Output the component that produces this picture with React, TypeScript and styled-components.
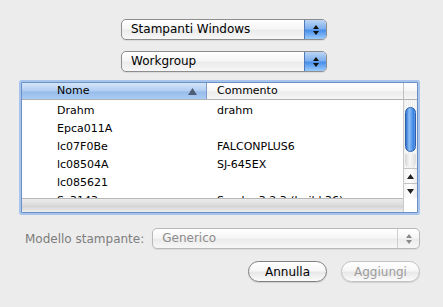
import styled, { createGlobalStyle } from 'styled-components'

const GlobalStyle = createGlobalStyle`
  html, body {
    margin: 0;
    padding: 0;
  }

  body {
    background: #ececec;
    font-family: 'DejaVu Sans', 'Liberation Sans', sans-serif;
    color: #000;
  }
`

const Dialog = styled.div`
  width: 443px;
  height: 307px;
  box-sizing: border-box;

  display: flex;
  flex-direction: column;

  padding: 19px 23px 0 19px;
`

const PopupStack = styled.div`
  display: flex;
  flex-direction: column;
  gap: 11px;

  padding-left: 102px;
`

const Popup = styled.div<{ $width?: number; $disabled?: boolean }>`
  display: flex;
  align-items: stretch;

  width: ${(p) => (p.$width ? `${p.$width}px` : 'auto')};
  flex: ${(p) => (p.$width ? 'none' : '1')};
  height: 21px;
  box-sizing: border-box;

  border: 1px solid ${(p) => (p.$disabled ? '#b9b9b9' : '#8d8d8d')};
  border-radius: 5px;
  overflow: hidden;

  background: linear-gradient(#ffffff, #f6f6f6 45%, #ebebeb 55%, #f7f7f7);
  box-shadow: 0 1px 1px rgba(0, 0, 0, 0.08);

  span {
    flex: 1;
    padding-left: 9px;
    font-size: 12px;
    line-height: 19px;
    color: ${(p) => (p.$disabled ? '#8c8c8c' : '#000')};
  }
`

const PopupArrows = styled.div<{ $disabled?: boolean }>`
  width: 21px;
  display: flex;
  flex-direction: column;
  align-items: center;
  justify-content: center;
  gap: 2px;

  border-left: 1px solid ${(p) => (p.$disabled ? '#cfcfcf' : '#4f7bbd')};
  background: ${(p) =>
    p.$disabled
      ? 'transparent'
      : 'linear-gradient(#bcd6f6, #7fb0ee 45%, #4a8fea 55%, #9ccbfb)'};

  svg {
    display: block;
  }
`

const TableFrame = styled.div`
  margin-top: 10px;
  margin-left: 2px;
  width: 397px;
  height: 131px;
  box-sizing: border-box;

  display: flex;
  flex-direction: column;

  border: 1px solid #6c90c4;
  box-shadow: 0 0 0 2px #a7c4ec;
  border-radius: 1px;
  background: #fff;
  overflow: hidden;
`

const HeaderRow = styled.div`
  display: flex;
  height: 17px;
  flex: none;
  box-sizing: border-box;
  border-bottom: 1px solid #b3b3b3;
  font-size: 11px;
  line-height: 16px;
`

const HeaderCell = styled.div<{ $width?: number; $sorted?: boolean; $inset?: number }>`
  position: relative;
  width: ${(p) => (p.$width ? `${p.$width}px` : 'auto')};
  flex: ${(p) => (p.$width ? 'none' : '1')};
  box-sizing: border-box;
  padding-left: ${(p) => p.$inset ?? 10}px;

  border-right: 1px solid ${(p) => (p.$sorted ? '#7c9ccb' : '#c2c2c2')};
  background: ${(p) =>
    p.$sorted
      ? 'linear-gradient(#d4e5fa, #b1cdf1 50%, #98bceb 55%, #a9cbf3)'
      : 'linear-gradient(#ffffff, #f6f6f6 50%, #ececec 55%, #f5f5f5)'};

  &:last-child {
    border-right: none;
  }
`

const SortArrow = styled.svg`
  position: absolute;
  right: 9px;
  top: 5px;
`

const Body = styled.div`
  display: flex;
  flex: 1;
  min-height: 0;
`

const Rows = styled.div`
  flex: 1;
  overflow: hidden;
  padding-top: 2px;
  font-size: 11px;
`

const Row = styled.div`
  display: flex;
  height: 18px;
  line-height: 18px;
`

const Cell = styled.div<{ $width?: number; $inset: number }>`
  width: ${(p) => (p.$width ? `${p.$width}px` : 'auto')};
  flex: ${(p) => (p.$width ? 'none' : '1')};
  padding-left: ${(p) => p.$inset}px;
  box-sizing: border-box;
  white-space: nowrap;
  overflow: hidden;
`

const VScroll = styled.div`
  width: 13px;
  flex: none;
  display: flex;
  flex-direction: column;
  border-left: 1px solid #c9c9c9;
  background: repeating-linear-gradient(90deg, #eeeeee 0 1px, #f8f8f8 1px 2px);
`

const Track = styled.div`
  flex: 1;
  padding-top: 7px;
  display: flex;
  flex-direction: column;
  align-items: center;
`

const Thumb = styled.div`
  width: 11px;
  height: 45px;
  box-sizing: border-box;
  border: 1px solid #2e5fa8;
  border-radius: 6px;
  background: linear-gradient(90deg, #2f6fd0, #8fc1f7 35%, #6aa7f0 55%, #3b83e3 85%, #5e9cea);
`

const TrackCap = styled.div`
  width: 11px;
  height: 14px;
  margin-top: 2px;
  border-radius: 0 0 6px 6px;
  background: linear-gradient(90deg, #d6d6d6, #f7f7f7 45%, #dcdcdc);
`

const ArrowButton = styled.div`
  height: 14px;
  display: flex;
  align-items: center;
  justify-content: center;
  border-top: 1px solid #c3c3c3;
  background: linear-gradient(90deg, #f4f4f4, #ffffff 50%, #ececec);
`

const BottomBar = styled.div`
  display: flex;
  height: 14px;
  flex: none;
`

const HScroll = styled.div`
  flex: 1;
  border-top: 1px solid #b7b7b7;
  background: linear-gradient(#ececec, #dddddd 45%, #d3d3d3 55%, #eeeeee);
`

const Corner = styled.div`
  width: 13px;
  border-left: 1px solid #c9c9c9;
  background: #fff;
`

const ModelRow = styled.div`
  display: flex;
  align-items: center;
  gap: 8px;
  margin-top: 15px;
  padding-left: 6px;
`

const Label = styled.span<{ $disabled?: boolean }>`
  font-size: 12px;
  color: ${(p) => (p.$disabled ? '#7d7d7d' : '#000')};
`

const ButtonRow = styled.div`
  display: flex;
  justify-content: flex-end;
  gap: 14px;
  margin-top: 12px;
`

const PushButton = styled.button<{ $disabled?: boolean }>`
  width: 79px;
  height: 21px;
  box-sizing: border-box;
  padding: 0;

  border: 1px solid ${(p) => (p.$disabled ? '#c2c2c2' : '#7f7f7f')};
  border-radius: 11px;
  background: linear-gradient(#ffffff, #f7f7f7 45%, #e8e8e8 55%, #fbfbfb);
  box-shadow: 0 1px 1px rgba(0, 0, 0, 0.12);

  font-family: 'DejaVu Sans', 'Liberation Sans', sans-serif;
  font-size: 12px;
  color: ${(p) => (p.$disabled ? '#9c9c9c' : '#000')};
`

function UpDown({ color }: { color: string }) {
  return (
    <>
      <svg width="6" height="4" viewBox="0 0 6 4">
        <path d="M3 0 L6 4 L0 4 Z" fill={color} />
      </svg>
      <svg width="6" height="4" viewBox="0 0 6 4">
        <path d="M0 0 L6 0 L3 4 Z" fill={color} />
      </svg>
    </>
  )
}

const rows = [
  { name: 'Drahm', comment: 'drahm' },
  { name: 'Epca011A', comment: '' },
  { name: 'lc07F0Be', comment: 'FALCONPLUS6' },
  { name: 'lc08504A', comment: 'SJ-645EX' },
  { name: 'lc085621', comment: '' },
  { name: 'Sc3143', comment: 'Samba 3.2.3 (build 36)' },
]

export default function App() {
  return (
    <>
      <GlobalStyle />
      <Dialog>
        <PopupStack>
          <Popup $width={206}>
            <span>Stampanti Windows</span>
            <PopupArrows>
              <UpDown color="#111" />
            </PopupArrows>
          </Popup>
          <Popup $width={206}>
            <span>Workgroup</span>
            <PopupArrows>
              <UpDown color="#111" />
            </PopupArrows>
          </Popup>
        </PopupStack>

        <TableFrame>
          <HeaderRow>
            <HeaderCell $width={185} $sorted $inset={35}>
              Nome
              <SortArrow width="9" height="7" viewBox="0 0 9 7">
                <path d="M4.5 0 L9 7 L0 7 Z" fill="#4d5d74" />
              </SortArrow>
            </HeaderCell>
            <HeaderCell $width={197}>Commento</HeaderCell>
            <HeaderCell />
          </HeaderRow>
          <Body>
            <Rows>
              {rows.map((r) => (
                <Row key={r.name}>
                  <Cell $width={185} $inset={35}>
                    {r.name}
                  </Cell>
                  <Cell $inset={10}>{r.comment}</Cell>
                </Row>
              ))}
            </Rows>
            <VScroll>
              <Track>
                <Thumb />
                <TrackCap />
              </Track>
              <ArrowButton>
                <svg width="7" height="5" viewBox="0 0 7 5">
                  <path d="M3.5 0 L7 5 L0 5 Z" fill="#222" />
                </svg>
              </ArrowButton>
              <ArrowButton>
                <svg width="7" height="5" viewBox="0 0 7 5">
                  <path d="M0 0 L7 0 L3.5 5 Z" fill="#222" />
                </svg>
              </ArrowButton>
            </VScroll>
          </Body>
          <BottomBar>
            <HScroll />
            <Corner />
          </BottomBar>
        </TableFrame>

        <ModelRow>
          <Label $disabled>Modello stampante:</Label>
          <Popup $disabled>
            <span>Generico</span>
            <PopupArrows $disabled>
              <UpDown color="#8a8a8a" />
            </PopupArrows>
          </Popup>
        </ModelRow>

        <ButtonRow>
          <PushButton>Annulla</PushButton>
          <PushButton $disabled disabled>
            Aggiungi
          </PushButton>
        </ButtonRow>
      </Dialog>
    </>
  )
}
